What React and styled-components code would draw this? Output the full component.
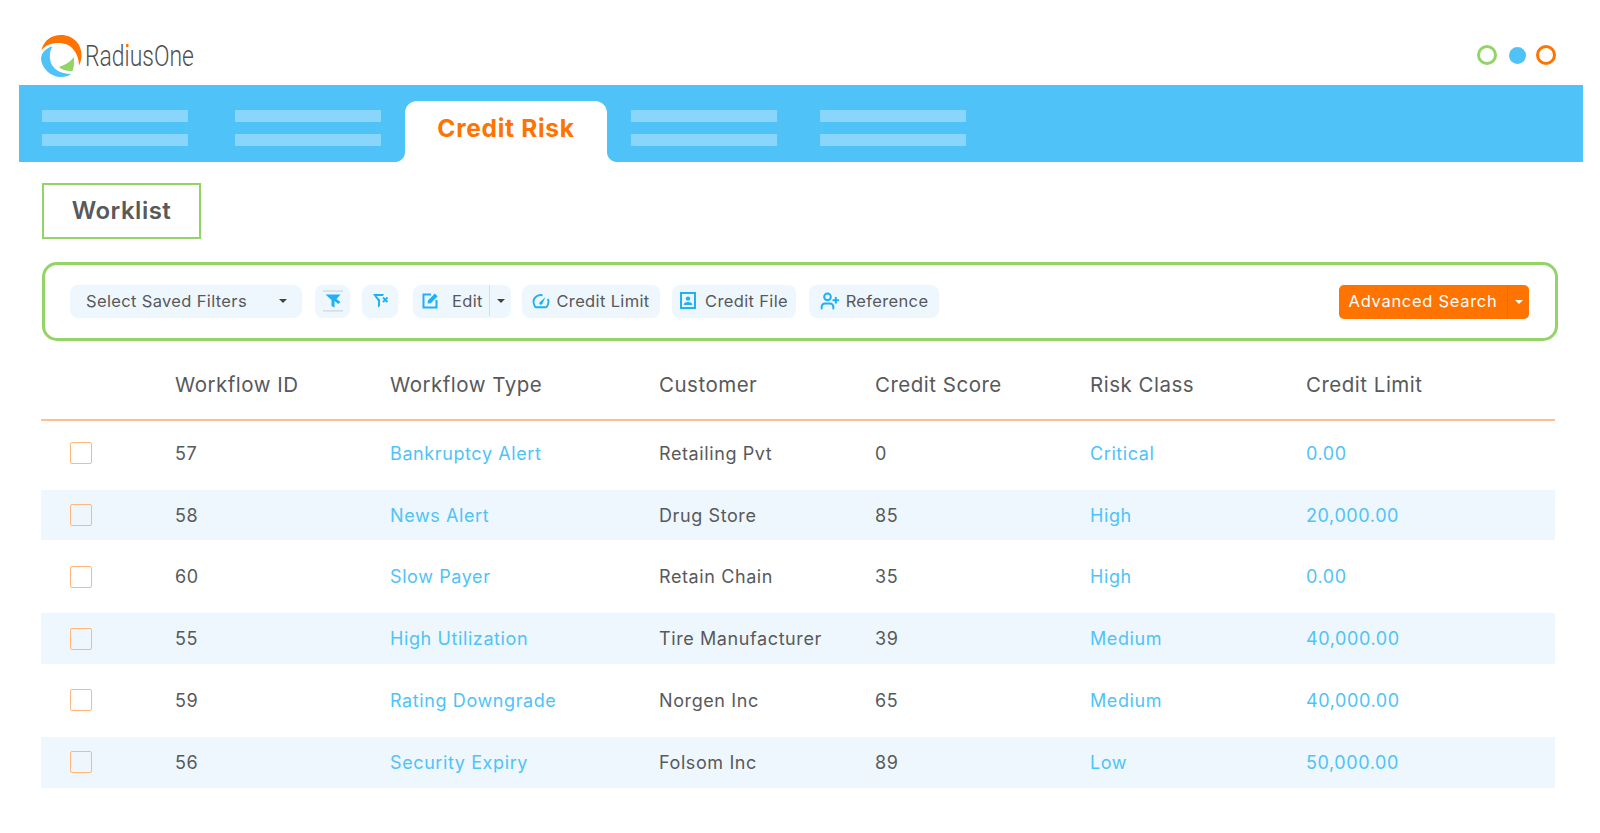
import React from "react";
import styled, { createGlobalStyle } from "styled-components";
import { UserPlus } from "lucide-react";

const blue = "#4fc3f8";
const orange = "#ff7300";
const green = "#92d466";
const ink = "#58595b";
const tint = "#eef7fd";
const iconBlue = "#1fb0f5";
const columns = "134px 215px 269px 216px 215px 216px 1fr";

const GlobalStyle = createGlobalStyle`
  html, body {
    margin: 0;
    background: #fff;
    font-family: "Inter", "Open Sans", sans-serif;
    color: ${ink};
  }
`;

const Page = styled.div`
  width: 1600px;
  height: 833px;
  overflow: hidden;
  box-sizing: border-box;
  padding: 0 17px 0 19px;
`;

const Header = styled.header`
  height: 85px;
  display: flex;
  align-items: flex-end;
  justify-content: space-between;
  padding: 0 27px 8px 22px;
  box-sizing: border-box;
`;

const Brand = styled.div`
  display: flex;
  align-items: center;
  gap: 3px;
`;

const BrandName = styled.span`
  display: inline-block;
  width: 110px;
  font-family: "Roboto", sans-serif;
  font-size: 29px;
  font-weight: 300;
  color: #4f5052;
  line-height: 32px;
  white-space: nowrap;
  transform: scaleX(0.79);
  transform-origin: left center;
`;

const DotlessI = styled.span`
  position: relative;
  &::before {
    content: "";
    position: absolute;
    left: 1.5px;
    top: 5px;
    width: 3px;
    height: 3px;
    background: ${orange};
  }
`;

const Dots = styled.div`
  display: flex;
  align-items: center;
  gap: 10px;
  margin-bottom: 12px;
`;

const Dot = styled.span`
  width: ${(p) => (p.$solid ? "17px" : "20px")};
  height: ${(p) => (p.$solid ? "17px" : "20px")};
  margin-left: ${(p) => (p.$solid ? "2px" : "0")};
  box-sizing: border-box;
  border-radius: 50%;
  border: ${(p) => (p.$solid ? "none" : `3.5px solid ${p.$color}`)};
  background: ${(p) => (p.$solid ? p.$color : "transparent")};
`;

const Nav = styled.nav`
  height: 77px;
  background: ${blue};
  display: flex;
  align-items: flex-end;
  padding-left: 23px;
`;

const Placeholder = styled.div`
  width: 146px;
  margin: 0 ${(p) => p.$right || 0}px 16px 0;
  display: flex;
  flex-direction: column;
  gap: 12px;
  span {
    height: 12px;
    background: #8ad6fa;
  }
`;

const ActiveTab = styled.div`
  position: relative;
  width: 202px;
  height: 61px;
  margin-right: 24px;
  margin-left: -1px;
  background: #fff;
  border-radius: 12px 12px 0 0;
  display: flex;
  justify-content: center;
  padding-top: 11px;
  box-sizing: border-box;
  color: ${orange};
  font-weight: 700;
  font-size: 24.5px;
  line-height: 32px;
  letter-spacing: 0.7px;

  &::before,
  &::after {
    content: "";
    position: absolute;
    bottom: 0;
    width: 10px;
    height: 10px;
  }
  &::before {
    left: -10px;
    background: radial-gradient(circle at 0 0, ${blue} 9.5px, #fff 10.5px);
  }
  &::after {
    right: -10px;
    background: radial-gradient(circle at 100% 0, ${blue} 9.5px, #fff 10.5px);
  }
`;

const Content = styled.main`
  padding: 21px 0 0 22px;
`;

const SectionTitle = styled.div`
  width: 159px;
  height: 56px;
  margin-left: 1px;
  padding-bottom: 2px;
  box-sizing: border-box;
  border: 2px solid ${green};
  display: flex;
  align-items: center;
  justify-content: center;
  font-size: 24px;
  font-weight: 600;
  letter-spacing: 0.5px;
  color: ${ink};
`;

const FilterBar = styled.div`
  width: 1516px;
  height: 79px;
  margin: 23px 0 0 1px;
  box-sizing: border-box;
  border: 3px solid ${green};
  border-radius: 15px;
  display: flex;
  align-items: center;
  padding: 0 26px 0 25px;
`;

const ToolButton = styled.button`
  height: 33px;
  width: ${(p) => p.$width}px;
  margin-right: ${(p) => p.$after || 12}px;
  border: none;
  border-radius: 8px;
  background: ${tint};
  color: ${ink};
  font-family: inherit;
  font-size: 16.5px;
  letter-spacing: 0.35px;
  display: flex;
  align-items: center;
  justify-content: center;
  gap: ${(p) => p.$gap || 6}px;
  padding: 0 0 2px;
  flex: none;
  svg {
    color: ${iconBlue};
    flex: none;
  }
`;

const SelectButton = styled(ToolButton)`
  padding: 0 15px 2px 16px;
  justify-content: space-between;
  box-sizing: border-box;
`;

const EditArea = styled.span`
  flex: 1;
  height: 100%;
  display: flex;
  align-items: center;
  gap: 13px;
  padding-left: 9px;
`;

const Caret = styled.span`
  width: 0;
  height: 0;
  border-left: 4px solid transparent;
  border-right: 4px solid transparent;
  border-top: 4px solid ${(p) => p.$color || "#444"};
`;

const CaretBox = styled.span`
  width: 22px;
  height: 100%;
  display: flex;
  align-items: center;
  justify-content: center;
  border-left: 1px solid ${(p) => p.$line || "#bfe6fb"};
  flex: none;
  box-sizing: border-box;
`;

const SearchButton = styled.button`
  margin-left: auto;
  width: 190px;
  height: 34px;
  border: none;
  border-radius: 5px;
  background: ${orange};
  color: #fff;
  font-family: inherit;
  font-size: 16.5px;
  letter-spacing: 0.7px;
  display: flex;
  align-items: center;
  padding: 0;
  flex: none;
`;

const SearchLabel = styled.span`
  flex: 1;
  text-align: center;
  padding-bottom: 2px;
`;

const Table = styled.div`
  width: 1514px;
  margin-top: 9px;
`;

const HeadRow = styled.div`
  display: grid;
  grid-template-columns: ${columns};
  height: 69px;
  align-items: center;
  border-bottom: 2px solid #ffbd94;
  margin-bottom: 7px;
  font-size: 20.5px;
  letter-spacing: 0.5px;
  color: ${ink};
`;

const Row = styled.div`
  display: grid;
  grid-template-columns: ${columns};
  height: 50.6px;
  margin-bottom: 11.2px;
  align-items: center;
  font-size: 18px;
  letter-spacing: 0.6px;
  background: ${(p) => (p.$shaded ? tint : "transparent")};
`;

const Cell = styled.div`
  color: ${(p) => (p.$link ? blue : ink)};
  white-space: nowrap;
`;

const CheckCell = styled.div`
  padding-left: 29px;
  display: flex;
`;

const Checkbox = styled.span`
  width: 22px;
  height: 22px;
  box-sizing: border-box;
  border: 1.5px solid #ffb77c;
  border-radius: 2px;
`;

const rows = [
  ["57", "Bankruptcy Alert", "Retailing Pvt", "0", "Critical", "0.00"],
  ["58", "News Alert", "Drug Store", "85", "High", "20,000.00"],
  ["60", "Slow Payer", "Retain Chain", "35", "High", "0.00"],
  ["55", "High Utilization", "Tire Manufacturer", "39", "Medium", "40,000.00"],
  ["59", "Rating Downgrade", "Norgen Inc", "65", "Medium", "40,000.00"],
  ["56", "Security Expiry", "Folsom Inc", "89", "Low", "50,000.00"],
];

const Logo = () => (
  <svg width="41" height="42" viewBox="0 0 41 42">
    <path
      d="M0.5 15 C3 5 11 0 20 0 C32 0 41 9 40.5 21 C40.3 25 39.3 28 38 30.5 C38 19 31 8.5 19 8 C11 7.5 5 10 0.5 15 Z"
      fill="#ff7300"
    />
    <path
      d="M9 12 C3 15 0 19 0 24 C1 34 10 42 20 42 C24 42 28 41 30 39 C20 39 10 34 9 24 C8.6 19 9 15 11.5 11.5 Z"
      fill="#4fc3f8"
    />
    <path d="M33 22 C33 29 33 33 31.5 36 C26 36.5 21 35 18 32 C24 30 29 27 33 22 Z" fill="#92d466" />
  </svg>
);

const ClearFiltersIcon = () => (
  <svg width="21" height="22" viewBox="0 0 21 22">
    <rect x="1" y="0.5" width="20" height="1.2" fill="#c9d5dc" />
    <rect x="1" y="20.3" width="20" height="1.2" fill="#c9d5dc" />
    <path d="M3.5 4.5 H18.5 L14.5 9 L18.5 12 L16.5 14 L12.5 11 V17.5 L9.5 16 V10 Z" fill="currentColor" />
  </svg>
);

const RemoveFilterIcon = () => (
  <svg width="17" height="17" viewBox="0 0 17 17">
    <path d="M1 2 H12 L11 4 H4.6 L8 7.8 V14 L6 15.5 V9 Z" fill="currentColor" />
    <path d="M11 5.5 L15.5 10 M15.5 5.5 L11 10" stroke="currentColor" strokeWidth="1.8" />
  </svg>
);

const EditIcon = () => (
  <svg width="17" height="17" viewBox="0 0 17 17" fill="none">
    <path d="M9 2.5 H1.5 V15.5 H14.5 V8" stroke="currentColor" strokeWidth="2" />
    <path d="M6 8.5 L12.8 1.5 L15.6 4.2 L8.7 11.2 L5.6 11.6 Z" fill="currentColor" />
  </svg>
);

const GaugeIcon = () => (
  <svg width="18" height="16" viewBox="0 0 18 16" fill="none">
    <path
      d="M10.5 2.2 C6 1.2 1.5 4.4 1.5 8.6 C1.5 10.5 2 11.8 3 13.5 C3.3 14 3.7 14.2 4.2 14.2 H13.8 C14.3 14.2 14.7 14 15 13.5 C16 11.8 16.5 10.5 16.5 8.6 C16.5 7.5 16.2 6.6 15.8 5.8"
      stroke="currentColor"
      strokeWidth="1.9"
    />
    <path d="M7.5 9.5 L13.5 4 L10.2 11 C9.5 12 8 11.8 7.5 11 C7.2 10.5 7.2 10 7.5 9.5 Z" fill="currentColor" />
  </svg>
);

const FileIcon = () => (
  <svg width="16" height="17" viewBox="0 0 16 17" fill="none">
    <rect x="1" y="1" width="14" height="15" stroke="currentColor" strokeWidth="2" />
    <circle cx="8" cy="6.6" r="2.2" fill="currentColor" />
    <path d="M3.8 13 C3.8 10.6 5.8 10 8 10 C10.2 10 12.2 10.6 12.2 13 Z" fill="currentColor" />
  </svg>
);

export default function App() {
  return (
    <Page>
      <GlobalStyle />
      <Header>
        <Brand>
          <Logo />
          <BrandName>
            Rad<DotlessI>ı</DotlessI>usOne
          </BrandName>
        </Brand>
        <Dots>
          <Dot $color={green} />
          <Dot $color={blue} $solid />
          <Dot $color={orange} />
        </Dots>
      </Header>
      <Nav>
        <Placeholder $right={47}>
          <span />
          <span />
        </Placeholder>
        <Placeholder $right={25}>
          <span />
          <span />
        </Placeholder>
        <ActiveTab>Credit Risk</ActiveTab>
        <Placeholder $right={43}>
          <span />
          <span />
        </Placeholder>
        <Placeholder>
          <span />
          <span />
        </Placeholder>
      </Nav>
      <Content>
        <SectionTitle>Worklist</SectionTitle>
        <FilterBar>
          <SelectButton $width={232} $after={13}>
            Select Saved Filters
            <Caret />
          </SelectButton>
          <ToolButton $width={35}>
            <ClearFiltersIcon />
          </ToolButton>
          <ToolButton $width={36} $after={15}>
            <RemoveFilterIcon />
          </ToolButton>
          <ToolButton $width={98} $gap={0} $after={11}>
            <EditArea>
              <EditIcon />
              Edit
            </EditArea>
            <CaretBox>
              <Caret />
            </CaretBox>
          </ToolButton>
          <ToolButton $width={138}>
            <GaugeIcon />
            Credit Limit
          </ToolButton>
          <ToolButton $width={124} $gap={9} $after={13}>
            <FileIcon />
            Credit File
          </ToolButton>
          <ToolButton $width={130}>
            <UserPlus size={20} strokeWidth={2.4} />
            Reference
          </ToolButton>
          <SearchButton>
            <SearchLabel>Advanced Search</SearchLabel>
            <CaretBox $line="#ee6c00">
              <Caret $color="#fff" />
            </CaretBox>
          </SearchButton>
        </FilterBar>
        <Table>
          <HeadRow>
            <div />
            <Cell>Workflow ID</Cell>
            <Cell>Workflow Type</Cell>
            <Cell>Customer</Cell>
            <Cell>Credit Score</Cell>
            <Cell>Risk Class</Cell>
            <Cell>Credit Limit</Cell>
          </HeadRow>
          {rows.map((r, i) => (
            <Row key={r[0]} $shaded={i % 2 === 1}>
              <CheckCell>
                <Checkbox />
              </CheckCell>
              <Cell>{r[0]}</Cell>
              <Cell $link>{r[1]}</Cell>
              <Cell>{r[2]}</Cell>
              <Cell>{r[3]}</Cell>
              <Cell $link>{r[4]}</Cell>
              <Cell $link>{r[5]}</Cell>
            </Row>
          ))}
        </Table>
      </Content>
    </Page>
  );
}
